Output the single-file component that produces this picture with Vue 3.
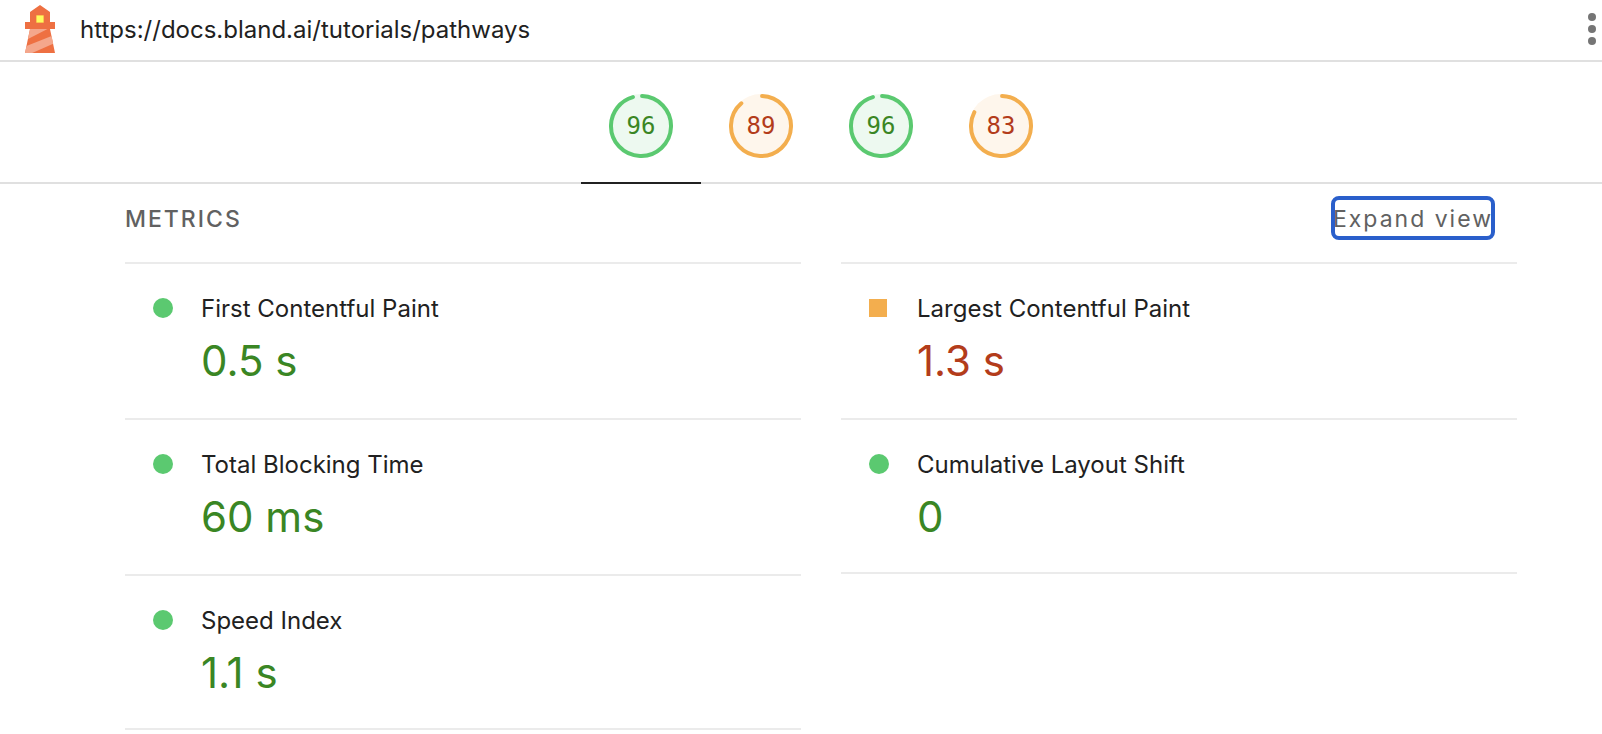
<script setup>
const gauges = [
  { score: 96, level: 'pass', label: 'Performance', active: true },
  { score: 89, level: 'average', label: 'Accessibility' },
  { score: 96, level: 'pass', label: 'Best Practices' },
  { score: 83, level: 'average', label: 'SEO' },
]

const columns = [
  [
    { name: 'First Contentful Paint', value: '0.5 s', level: 'pass' },
    { name: 'Total Blocking Time', value: '60 ms', level: 'pass' },
    { name: 'Speed Index', value: '1.1 s', level: 'pass' },
  ],
  [
    { name: 'Largest Contentful Paint', value: '1.3 s', level: 'average' },
    { name: 'Cumulative Layout Shift', value: '0', level: 'pass' },
  ],
]

const RADIUS = 30
const CIRCUMFERENCE = 2 * Math.PI * RADIUS
const dash = (score) => `${(score / 100) * CIRCUMFERENCE - 2} ${CIRCUMFERENCE}`
</script>

<template>
  <div class="report">
    <header class="topbar">
      <svg class="logo" viewBox="0 0 48 48" aria-hidden="true">
        <path fill="#ee7042" d="m14 7 10-7 10 7v10h5v7h-5l5 24H9l5-24H9v-7h5V7Z" />
        <path fill="#f4a78c" d="M14 24h17.500L12 34Z" />
        <path fill="#f4a78c" d="M10.500 41 35.600 31 37.200 38.800 16.200 48H9Z" />
        <path fill="#f4943f" d="M20 10h8v8h-8z" />
        <path fill="#fffb5e" d="M20.500 10.500h7v7h-7z" />
      </svg>
      <a class="url" href="https://docs.bland.ai/tutorials/pathways">https://docs.bland.ai/tutorials/pathways</a>
      <button class="menu" type="button" aria-label="Tools menu">
        <svg viewBox="0 0 8 32" aria-hidden="true">
          <circle cx="4" cy="4" r="4" />
          <circle cx="4" cy="16" r="4" />
          <circle cx="4" cy="28" r="4" />
        </svg>
      </button>
    </header>

    <nav class="scores">
      <a
        v-for="g in gauges"
        :key="g.label"
        href="#"
        class="score"
        :class="[g.level, { active: g.active }]"
        :aria-label="g.label + ' ' + g.score"
      >
        <span class="gauge">
          <svg viewBox="0 0 64 64" aria-hidden="true">
            <circle class="disc" cx="32" cy="32" r="32" />
            <circle
              class="arc"
              cx="32"
              cy="32"
              :r="RADIUS"
              :stroke-dasharray="dash(g.score)"
              transform="rotate(-88 32 32)"
            />
          </svg>
          <span class="number">{{ g.score }}</span>
        </span>
      </a>
    </nav>

    <main class="metrics">
      <div class="heading">
        <h2>METRICS</h2>
        <button class="expand" type="button">Expand view</button>
      </div>
      <div class="columns">
        <div v-for="(column, i) in columns" :key="i" class="column">
          <section v-for="m in column" :key="m.name" class="metric" :class="m.level">
            <span class="marker"></span>
            <div>
              <h3>{{ m.name }}</h3>
              <p>{{ m.value }}</p>
            </div>
          </section>
        </div>
      </div>
    </main>
  </div>
</template>

<style>
body {
  background: #fff;
  overflow: hidden;
}
</style>

<style scoped>
.report {
  color: #212121;
  font-family: Inter, Roboto, sans-serif;
  font-size: 24px;
  line-height: 32px;
}

.pass {
  --mark: #5bc970;
  --tint: #edf9f0;
  --ink: #3a8624;
}

.average {
  --mark: #f3ae4e;
  --tint: #fef6ec;
  --ink: #b33c1b;
}

.topbar {
  display: flex;
  align-items: center;
  box-sizing: border-box;
  height: 62px;
  padding: 0 6px 2px 16px;
  border-bottom: 2px solid #e0e0e0;
}

.logo {
  width: 48px;
  height: 48px;
}

.url {
  flex: 1;
  padding-top: 2px;
  margin-left: 16px;
  color: inherit;
  text-decoration: none;
}

.menu {
  display: flex;
  padding: 0;
  border: 0;
  background: none;
}

.menu svg {
  width: 8px;
  height: 32px;
  fill: #757575;
}

.scores {
  display: flex;
  justify-content: center;
  padding-left: 40px;
  border-bottom: 2px solid #e0e0e0;
}

.score {
  display: flex;
  justify-content: center;
  width: 120px;
  padding: 32px 0 24px;
  margin-bottom: -2px;
  border-bottom: 2px solid transparent;
  color: var(--ink);
  text-decoration: none;
}

.score.active {
  border-bottom-color: #212121;
}

.gauge {
  display: grid;
  place-items: center;
  width: 64px;
  height: 64px;
}

.gauge > * {
  grid-area: 1 / 1;
}

.gauge svg {
  width: 64px;
  height: 64px;
}

.disc {
  fill: var(--tint);
}

.arc {
  fill: none;
  stroke: var(--mark);
  stroke-width: 4;
  stroke-linecap: round;
}

.number {
  font-family: "DejaVu Sans Mono", monospace;
}

.metrics {
  padding: 14px 85px 0 125px;
}

.heading {
  display: flex;
  align-items: center;
  justify-content: space-between;
  padding-right: 24px;
  margin-bottom: 24px;
  color: #616161;
  font-size: 23px;
}

h2,
h3,
p {
  margin: 0;
  font-size: inherit;
  font-weight: 400;
}

h2 {
  padding-top: 2px;
  font-weight: 500;
  letter-spacing: 2px;
}

.expand {
  padding: 5px 0 3px;
  border: 0;
  border-radius: 6px;
  outline: 4px solid #2a5fcb;
  outline-offset: -2px;
  background: none;
  color: inherit;
  font: inherit;
  letter-spacing: 2px;
}

.columns {
  display: grid;
  grid-template-columns: 1fr 1fr;
  gap: 40px;
}

.metric {
  display: flex;
  box-sizing: border-box;
  min-height: 156px;
  padding: 29px 0 0 28px;
  border-top: 2px solid #ebebeb;
}

.metric:last-child {
  border-bottom: 2px solid #ebebeb;
}

.marker {
  width: 20px;
  height: 20px;
  margin: 5px 28px 0 0;
  border-radius: 50%;
  background: var(--mark);
}

.average .marker {
  width: 18px;
  height: 18px;
  margin: 6px 30px 0 0;
  border-radius: 0;
}

.metric p {
  color: var(--ink);
  font-size: 42px;
  line-height: 72px;
}
</style>
